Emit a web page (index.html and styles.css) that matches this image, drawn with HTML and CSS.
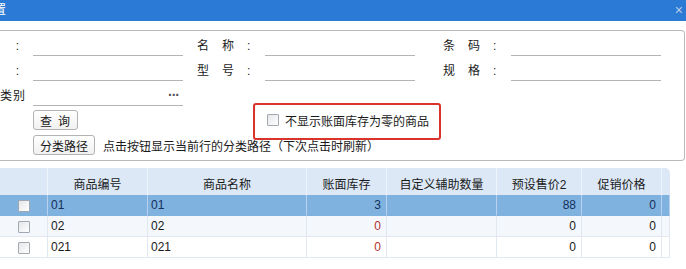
FILE: index.html
```html
<!DOCTYPE html>
<html lang="zh-CN">

<head>
    <meta charset="UTF-8">
    <title>商品选择</title>
    <link rel="stylesheet" href="styles.css">
</head>

<body>
    <div class="window">
        <div class="titlebar">
            <span class="title">置</span>
            <span class="close">×</span>
        </div>

        <!-- filter panel -->
        <div class="filter">
            <div class="row">
                <label class="lbl lbl-first">:</label>
                <span class="field"></span>
                <label class="lbl lbl-mid">名称:</label>
                <span class="field"></span>
                <label class="lbl lbl-mid lbl-far">条码:</label>
                <span class="field"></span>
            </div>
            <div class="row">
                <label class="lbl lbl-first">:</label>
                <span class="field"></span>
                <label class="lbl lbl-mid">型号:</label>
                <span class="field"></span>
                <label class="lbl lbl-mid lbl-far">规格:</label>
                <span class="field"></span>
            </div>
            <div class="row">
                <label class="lbl lbl-first lbl-cat">类别</label>
                <span class="field"><span class="more">···</span></span>
            </div>
            <div class="row row-query">
                <button class="btn btn-query">查询</button>
                <label class="check">
                    <span class="box"></span>
                    不显示账面库存为零的商品
                </label>
            </div>
            <div class="row row-path">
                <button class="btn btn-path">分类路径</button>
                <span class="hint">点击按钮显示当前行的分类路径（下次点击时刷新）</span>
            </div>
        </div>

        <!-- goods grid -->
        <table class="grid">
            <colgroup>
                <col style="width: 48px">
                <col style="width: 100px">
                <col style="width: 159px">
                <col style="width: 80px">
                <col style="width: 110px">
                <col style="width: 85px">
                <col style="width: 80px">
                <col style="width: 8px">
            </colgroup>
            <thead>
                <tr>
                    <th></th>
                    <th>商品编号</th>
                    <th>商品名称</th>
                    <th>账面库存</th>
                    <th>自定义辅助数量</th>
                    <th>预设售价2</th>
                    <th>促销价格</th>
                    <th class="last"></th>
                </tr>
            </thead>
            <tbody>
                <tr class="selected">
                    <td class="sel"><span class="box"></span></td>
                    <td>01</td>
                    <td>01</td>
                    <td class="num">3</td>
                    <td></td>
                    <td class="num">88</td>
                    <td class="num">0</td>
                    <td></td>
                </tr>
                <tr class="alt">
                    <td class="sel"><span class="box"></span></td>
                    <td>02</td>
                    <td>02</td>
                    <td class="num zero">0</td>
                    <td></td>
                    <td class="num">0</td>
                    <td class="num">0</td>
                    <td></td>
                </tr>
                <tr>
                    <td class="sel"><span class="box"></span></td>
                    <td>021</td>
                    <td>021</td>
                    <td class="num zero">0</td>
                    <td></td>
                    <td class="num">0</td>
                    <td class="num">0</td>
                    <td></td>
                </tr>
            </tbody>
        </table>
    </div>
</body>

</html>
```

FILE: styles.css
```css
* {
    margin: 0;
    padding: 0;
    box-sizing: border-box;
}

body {
    font-family: 'Liberation Sans', 'Noto Sans CJK SC', sans-serif;
    font-size: 12px;
    color: #1a1a1a;
    background: #fff;
    overflow: hidden;
}

.window {
    width: 686px;
    height: 269px;
    overflow: hidden;
}

.titlebar {
    height: 21px;
    background-color: #2b7bd6;
    display: flex;
    justify-content: space-between;
    align-items: center;
    padding-right: 3px;
}

.title {
    color: #fff;
    margin-left: -6px;
    line-height: 21px;
}

.close {
    color: #b9cbe6;
    font-size: 14px;
    line-height: 21px;
}

.filter {
    margin: 9px 1px 0 0;
    border: 1px solid #b9b9b9;
    border-left: none;
    border-radius: 0 4px 4px 0;
    padding: 3px 0;
}

.row {
    display: flex;
    align-items: flex-start;
    height: 25px;
}

.lbl {
    line-height: 24px;
    white-space: nowrap;
}

.lbl-first {
    width: 33px;
    text-align: right;
    padding-right: 14px;
}

.lbl-cat {
    padding-right: 8px;
    letter-spacing: 1px;
}

.lbl-mid {
    width: 68px;
    margin-left: 14px;
    letter-spacing: 13px;
}

.lbl-far {
    margin-left: 28px;
}

.field {
    width: 150px;
    height: 22px;
    border-bottom: 1px solid #b4b4b4;
    display: flex;
    justify-content: flex-end;
    align-items: center;
}

.more {
    font-size: 14px;
    font-weight: bold;
    letter-spacing: -1px;
    color: #555;
    padding-right: 4px;
}

.row-query {
    height: 22px;
    align-items: center;
}

.row-path {
    height: 24px;
    margin-top: 2px;
    align-items: center;
}

.btn {
    font-family: inherit;
    font-size: 12px;
    color: #1a1a1a;
    height: 20px;
    margin-left: 33px;
    border: 1px solid #b3b3b3;
    border-radius: 3px;
    background: linear-gradient(#ffffff, #f1f1f1);
    text-align: left;
}

.btn-query {
    width: 45px;
    padding-left: 6px;
    letter-spacing: 6px;
}

.btn-path {
    width: 62px;
    padding-left: 6px;
}

.check {
    position: relative;
    display: flex;
    align-items: center;
    gap: 6px;
    margin-left: 189px;
    white-space: nowrap;
}

/* red highlight frame drawn over the checkbox */
.check::after {
    content: '';
    position: absolute;
    left: -14px;
    right: -12px;
    top: -9px;
    bottom: -11px;
    border: 2px solid #d9332b;
    border-radius: 3px;
}

.box {
    display: inline-block;
    width: 12px;
    height: 12px;
    border: 1px solid #a3a9b1;
    border-radius: 1px;
    background: linear-gradient(135deg, #e4e6e9, #ffffff);
}

.hint {
    margin-left: 8px;
    white-space: nowrap;
}

.grid {
    width: 670px;
    margin-top: 7px;
    table-layout: fixed;
    border-collapse: separate;
    border-spacing: 0;
}

.grid th {
    height: 27px;
    padding-top: 4px;
    background-color: #dce8f6;
    border-right: 1px solid #eef4fb;
    font-weight: normal;
    text-align: center;
    white-space: nowrap;
}

.grid th.last {
    border-right: none;
    border-top-right-radius: 5px;
}

.grid td {
    height: 21px;
    padding: 0 3px;
    border-right: 1px solid #e2e8ef;
    border-bottom: 1px solid #e2e8ef;
    white-space: nowrap;
}

.grid td.num {
    text-align: right;
    padding-right: 5px;
}

.grid td.sel {
    text-align: center;
    padding: 0;
}

.grid td.sel .box {
    vertical-align: middle;
}

.grid tr.selected td {
    background-color: #80b2e0;
    border-right-color: #b7d2ee;
    border-bottom-color: #80b2e0;
    color: #14305a;
}

.grid tr.alt td {
    background-color: #f4f8fc;
}

.grid td.zero {
    color: #b3322c;
}
```
